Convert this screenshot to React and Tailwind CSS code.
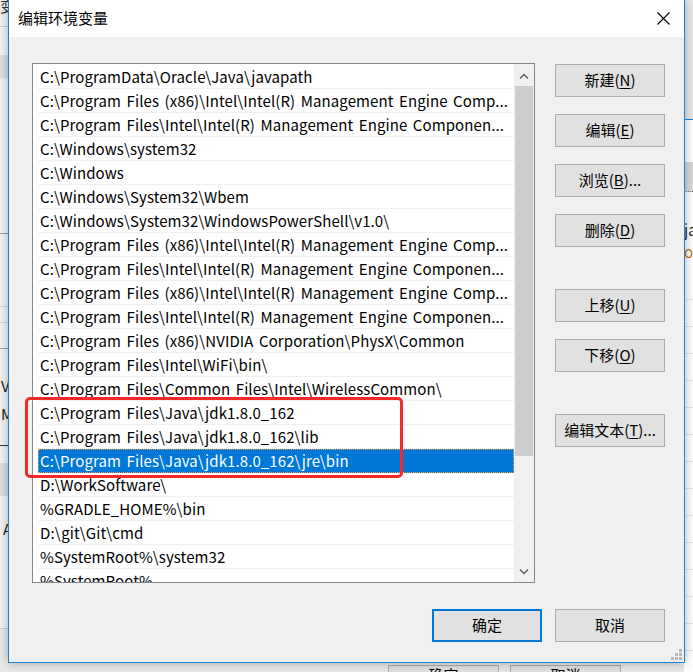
import React from 'react';

const PATHS = [
  'C:\\ProgramData\\Oracle\\Java\\javapath',
  'C:\\Program Files (x86)\\Intel\\Intel(R) Management Engine Comp...',
  'C:\\Program Files\\Intel\\Intel(R) Management Engine Componen...',
  'C:\\Windows\\system32',
  'C:\\Windows',
  'C:\\Windows\\System32\\Wbem',
  'C:\\Windows\\System32\\WindowsPowerShell\\v1.0\\',
  'C:\\Program Files (x86)\\Intel\\Intel(R) Management Engine Comp...',
  'C:\\Program Files\\Intel\\Intel(R) Management Engine Componen...',
  'C:\\Program Files (x86)\\Intel\\Intel(R) Management Engine Comp...',
  'C:\\Program Files\\Intel\\Intel(R) Management Engine Componen...',
  'C:\\Program Files (x86)\\NVIDIA Corporation\\PhysX\\Common',
  'C:\\Program Files\\Intel\\WiFi\\bin\\',
  'C:\\Program Files\\Common Files\\Intel\\WirelessCommon\\',
  'C:\\Program Files\\Java\\jdk1.8.0_162',
  'C:\\Program Files\\Java\\jdk1.8.0_162\\lib',
  'C:\\Program Files\\Java\\jdk1.8.0_162\\jre\\bin',
  'D:\\WorkSoftware\\',
  '%GRADLE_HOME%\\bin',
  'D:\\git\\Git\\cmd',
  '%SystemRoot%\\system32',
  '%SystemRoot%',
];

const SELECTED = 16;

function Btn({ label, hot, tail = ')', primary = false, className = '' }) {
  return (
    <button
      className={`flex h-[33px] w-[110px] items-center justify-center bg-[#e1e1e1] text-[15px] text-black ${
        primary ? 'border-2 border-[#0078d7]' : 'border border-[#adadad]'
      } ${className}`}
    >
      {label}
      {hot && (
        <>
          (<span className="underline underline-offset-2">{hot}</span>{tail}
        </>
      )}
    </button>
  );
}

function Chevron({ up }) {
  return (
    <svg width="10" height="6" viewBox="0 0 10 6">
      <path
        d={up ? 'M1 5.5 L5 1.5 L9 5.5' : 'M1 0.5 L5 4.5 L9 0.5'}
        fill="none"
        stroke="#606060"
        strokeWidth="1.5"
      />
    </svg>
  );
}

function PathList() {
  return (
    <div className="flex h-[520px] w-[503px] border border-[#828790] bg-white">
      <div className="flex min-w-0 flex-1 flex-col overflow-hidden pl-[5px] pt-px">
        {PATHS.map((p, i) => (
          <div
            key={i}
            className={`flex h-[24px] shrink-0 items-center overflow-hidden whitespace-nowrap pl-[2px] text-[15px] leading-[23px] tracking-[0.1px] [word-spacing:2px] ${
              i === SELECTED
                ? 'border-b border-[#0078d7] bg-[#0078d7] text-white outline-1 -outline-offset-1 outline-dotted outline-[#e8a048]'
                : 'border-b border-[#f0f0f0] text-black'
            }`}
          >
            {p}
          </div>
        ))}
      </div>
      <div className="flex w-[20px] flex-col bg-[#f0f0f0] pt-px">
        <div className="flex h-[21px] items-center justify-center">
          <Chevron up />
        </div>
        <div className="mx-px h-[370px] bg-[#cdcdcd]" />
        <div className="flex-1" />
        <div className="flex h-[21px] items-center justify-center">
          <Chevron />
        </div>
      </div>
    </div>
  );
}

function SizeGrip() {
  const dots = [[8, 0], [4, 4], [8, 4], [0, 8], [4, 8], [8, 8]];
  return (
    <svg width="11" height="11" viewBox="0 0 11 11" className="absolute bottom-[2px] right-[2px]">
      {dots.map(([x, y], i) => (
        <rect key={i} x={x} y={y} width="3" height="3" fill="#b8b8b8" />
      ))}
    </svg>
  );
}

function BackgroundWindow() {
  return (
    <div className="flex h-full w-full">
      {/* left sliver of the window behind */}
      <div className="flex w-[8px] flex-col overflow-hidden bg-[#f3f3f3]">
        <div className="h-[27px] shrink-0 border-b border-[#cfcfcf] text-[15px] leading-[12px] text-[#333]">变</div>
        <div className="h-[28px] shrink-0" />
        <div className="h-[23px] shrink-0 bg-[#e0e0e0]" />
        <div className="h-[156px] shrink-0 border-b border-[#9a9a9a]" />
        <div className="h-[73px] shrink-0 border-b border-[#d8d8d8]" />
        <div className="h-[16px] shrink-0 border-b border-[#d8d8d8]" />
        <div className="h-[26px] shrink-0 border-b border-[#9a9a9a]" />
        <div className="h-[23px] shrink-0" />
        <div className="h-[28px] shrink-0 pl-[1px] text-[15px] leading-[28px] text-[#222]">V</div>
        <div className="h-[28px] shrink-0 pl-[1px] text-[15px] leading-[28px] text-[#222]">M</div>
        <div className="h-[18px] shrink-0 border-b border-[#333]" />
        <div className="h-[17px] shrink-0" />
        <div className="h-[33px] shrink-0 bg-[#e0e0e0]" />
        <div className="h-[20px] shrink-0" />
        <div className="h-[26px] shrink-0 pl-[3px] text-[15px] leading-[26px] text-[#222]">A</div>
        <div className="h-[87px] shrink-0 border-b border-[#d0d0d0]" />
        <div className="flex-1 bg-[#e9e9e9]" />
      </div>

      {/* middle, mostly hidden; only its footer buttons peek below the dialog */}
      <div className="flex flex-1 flex-col bg-[#e9e9e9]">
        <div className="ml-[380px] mt-[665px] flex gap-[11px]">
          <div className="flex h-[33px] w-[111px] justify-center border border-[#adadad] bg-[#e1e1e1] pt-[1px] text-[15px] leading-[15px]">确定</div>
          <div className="flex h-[33px] w-[111px] justify-center border border-[#adadad] bg-[#e1e1e1] pt-[1px] text-[15px] leading-[15px]">取消</div>
        </div>
      </div>

      {/* right sliver */}
      <div className="flex w-[9px] flex-col overflow-hidden bg-[#f4f4f4]">
        <div className="h-[120px] shrink-0 border-b border-[#1883d7] bg-[#e8e8e8]" />
        <div className="h-[42px] shrink-0 bg-white" />
        <div className="h-[30px] shrink-0 border-b border-dotted border-[#777] bg-[#d9d9d9]" />
        <div className="h-[27px] shrink-0 bg-white" />
        <div className="h-[22px] shrink-0 bg-white text-[15px] leading-[22px] text-[#222]">ja</div>
        <div className="h-[22px] shrink-0 bg-white text-[15px] leading-[22px] text-[#c77a00]">ol</div>
        <div className="h-[37px] shrink-0 border-b border-[#e4e4e4] bg-white" />
        {Array.from({ length: 14 }).map((_, i) => (
          <div key={i} className="h-[27px] shrink-0 border-b border-[#e4e4e4] bg-white" />
        ))}
      </div>
    </div>
  );
}

export default function App() {
  return (
    <div className="relative h-[672px] w-[693px] overflow-hidden bg-[#e9e9e9] font-['Noto_Sans_CJK_SC','Noto_Sans',sans-serif] text-black">
      <BackgroundWindow />

      {/* 编辑环境变量 dialog */}
      <div className="absolute left-[8px] top-0 flex h-[663px] w-[677px] flex-col border-x border-b border-[#1883d7] bg-[#f0f0f0] shadow-[0_0_10px_rgba(0,0,0,0.3)]">
        <div className="flex h-[37px] shrink-0 items-center justify-between bg-white pl-[9px] pr-[14px]">
          <span className="text-[15px]">编辑环境变量</span>
          <svg width="13" height="13" viewBox="0 0 13 13">
            <path d="M0.5 0.5 L12.5 12.5 M12.5 0.5 L0.5 12.5" stroke="#000" strokeWidth="1.1" />
          </svg>
        </div>

        <div className="relative flex flex-1 flex-col pl-[23px] pr-[19px] pt-[26px]">
          <div className="flex">
            <PathList />
            <div className="ml-[20px] flex flex-col pt-px">
              <Btn label="新建" hot="N" />
              <Btn label="编辑" hot="E" className="mt-[17px]" />
              <Btn label="浏览" hot="B" tail=")..." className="mt-[17px]" />
              <Btn label="删除" hot="D" className="mt-[17px]" />
              <Btn label="上移" hot="U" className="mt-[42px]" />
              <Btn label="下移" hot="O" className="mt-[17px]" />
              <Btn label="编辑文本" hot="T" tail=")..." className="mt-[42px]" />
            </div>
          </div>

          <div className="mt-[26px] flex justify-end gap-[13px]">
            <Btn label="确定" primary />
            <Btn label="取消" />
          </div>

          <SizeGrip />
        </div>
      </div>

      {/* red annotation box */}
      <div className="absolute left-[25px] top-[397px] h-[81px] w-[378px] rounded-[5px] border-[3px] border-[#f42a2a]" />
    </div>
  );
}
